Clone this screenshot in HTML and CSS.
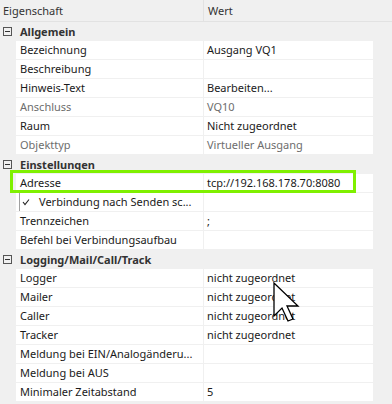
FILE: index.html
```html
<!DOCTYPE html>
<html lang="de">
<head>
  <meta charset="UTF-8" />
  <title>Eigenschaften</title>
  <link rel="stylesheet" href="styles.css">
</head>
<body>
  <div class="grid">
    <div class="head">
      <div class="h-name">Eigenschaft</div>
      <div class="h-value">Wert</div>
    </div>

    <div class="cat"><span class="toggle"></span>Allgemein</div>
    <div class="row"><div class="name">Bezeichnung</div><div class="value">Ausgang VQ1</div></div>
    <div class="row"><div class="name">Beschreibung</div><div class="value"></div></div>
    <div class="row"><div class="name">Hinweis-Text</div><div class="value">Bearbeiten...</div></div>
    <div class="row off"><div class="name">Anschluss</div><div class="value">VQ10</div></div>
    <div class="row"><div class="name">Raum</div><div class="value">Nicht zugeordnet</div></div>
    <div class="row off"><div class="name">Objekttyp</div><div class="value">Virtueller Ausgang</div></div>

    <div class="cat"><span class="toggle"></span>Einstellungen</div>
    <div class="row marked">
      <div class="name">Adresse</div><div class="value">tcp://192.168.178.70:8080</div>
      <div class="highlight"></div>
    </div>
    <div class="row check">
      <div class="name">
        <svg class="tick" width="14" height="18" viewBox="0 0 14 18">
          <line x1="0.5" y1="0" x2="0.5" y2="18" stroke="#a0a0a0" />
          <polyline points="4,9 6,11.5 10,6.5" fill="none" stroke="#222" stroke-width="1.1" />
        </svg>
        Verbindung nach Senden sc...
      </div>
      <div class="value"></div>
    </div>
    <div class="row"><div class="name">Trennzeichen</div><div class="value">;</div></div>
    <div class="row"><div class="name">Befehl bei Verbindungsaufbau</div><div class="value"></div></div>

    <div class="cat"><span class="toggle"></span>Logging/Mail/Call/Track</div>
    <div class="row"><div class="name">Logger</div><div class="value">nicht zugeordnet</div></div>
    <div class="row"><div class="name">Mailer</div><div class="value">nicht zugeordnet</div></div>
    <div class="row"><div class="name">Caller</div><div class="value">nicht zugeordnet</div></div>
    <div class="row"><div class="name">Tracker</div><div class="value">nicht zugeordnet</div></div>
    <div class="row"><div class="name">Meldung bei EIN/Analogänderu...</div><div class="value"></div></div>
    <div class="row"><div class="name">Meldung bei AUS</div><div class="value"></div></div>
    <div class="row"><div class="name">Minimaler Zeitabstand</div><div class="value">5</div></div>

    <!-- mouse pointer over the Logger/Mailer values -->
    <svg class="cursor" width="28" height="40" viewBox="0 0 28 40">
      <polygon points="1,1 1,34 9,26 15,39 20,37 14,24 25,24" fill="#fff" stroke="#000" stroke-width="1.3" stroke-linejoin="miter" />
    </svg>
  </div>
</body>
</html>
```

FILE: styles.css
```css
body {
  margin: 0;
  background: #f0f0f0;
  font-family: "Noto Sans", "Open Sans", sans-serif;
  font-size: 11px;
  color: #1a1a1a;
}
.grid {
  position: relative;
  width: 392px;
  height: 404px;
  overflow: hidden;
  background: #f0f0f0;
}
.head {
  display: flex;
  height: 21px;
  line-height: 21px;
  border-bottom: 1px solid #e2e2e2;
  color: #333;
}
.h-name {
  width: 200px;
  padding-left: 3px;
  border-right: 1px solid #e2e2e2;
}
.h-value {
  padding-left: 4px;
}
.cat {
  display: flex;
  align-items: center;
  height: 18px;
  border-bottom: 1px solid #f0f0f0;
  font-weight: bold;
  color: #333;
}
.toggle {
  position: relative;
  box-sizing: border-box;
  width: 9px;
  height: 9px;
  margin: 0 8px 0 3px;
  border: 1px solid #555;
}
.toggle::after {
  content: "";
  position: absolute;
  left: 1px;
  top: 3px;
  width: 5px;
  height: 1px;
  background: #333;
}
.row {
  position: relative;
  display: flex;
  height: 18px;
  line-height: 18px;
  margin-left: 16px;
  width: 357px;
  border-bottom: 1px solid #f0f0f0;
  background: #fff;
}
.name {
  width: 183px;
  padding-left: 4px;
  border-right: 1px solid #f0f0f0;
  white-space: nowrap;
  overflow: hidden;
}
.value {
  padding-left: 3px;
  white-space: nowrap;
}
.off {
  color: #6d6d6d;
}
.check .name {
  display: flex;
  align-items: center;
  padding-left: 3px;
  width: 184px;
}
.tick {
  margin-right: 6px;
}
.highlight {
  position: absolute;
  left: -6px;
  top: -4px;
  width: 340px;
  height: 17px;
  border: 3px solid #7ff000;
}
.cursor {
  position: absolute;
  left: 273px;
  top: 282px;
}
```
